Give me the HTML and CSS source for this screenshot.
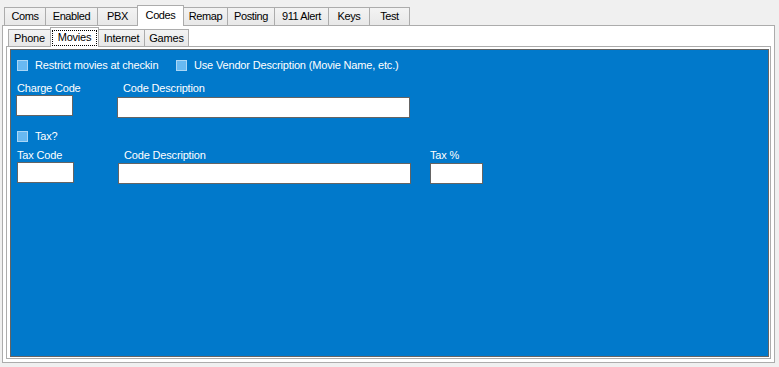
FILE: index.html
```html
<!DOCTYPE html>
<html>
<head>
<meta charset="utf-8">
<link rel="stylesheet" href="styles.css">
</head>
<body>
<div class="tabctl outer">
  <div class="tabstrip outer-strip">
    <div class="tab w42">Coms</div>
    <div class="tab w53">Enabled</div>
    <div class="tab w41">PBX</div>
    <div class="tab sel w47">Codes</div>
    <div class="tab w45">Remap</div>
    <div class="tab w48">Posting</div>
    <div class="tab w55">911 Alert</div>
    <div class="tab w42">Keys</div>
    <div class="tab w41 last">Test</div>
  </div>
  <div class="page outer-page">
    <div class="tabctl inner">
      <div class="tabstrip inner-strip">
        <div class="tab itab w43">Phone</div>
        <div class="tab itab sel isel w49"><span class="focus">Movies</span></div>
        <div class="tab itab w47">Internet</div>
        <div class="tab itab w45">Games</div>
      </div>
      <div class="page inner-page">
        <div class="blue">
          <div class="row chk-row r1">
            <label class="chk first"><span class="box"></span><span>Restrict movies at checkin</span></label>
            <label class="chk"><span class="box"></span><span>Use Vendor Description (Movie Name, etc.)</span></label>
          </div>
          <div class="row fields r2">
            <div class="field f-charge">
              <div class="lbl l2">Charge Code</div>
              <div class="inp in-charge"></div>
            </div>
            <div class="field f-desc">
              <div class="lbl l2 lbl-desc">Code Description</div>
              <div class="inp in-desc"></div>
            </div>
          </div>
          <div class="row chk-row r3">
            <label class="chk"><span class="box"></span><span>Tax?</span></label>
          </div>
          <div class="row fields r4">
            <div class="field f-taxcode">
              <div class="lbl l4">Tax Code</div>
              <div class="inp in-taxcode"></div>
            </div>
            <div class="field f-desc2">
              <div class="lbl l4 lbl-desc">Code Description</div>
              <div class="inp in-desc2"></div>
            </div>
            <div class="field f-taxpct">
              <div class="lbl l4">Tax %</div>
              <div class="inp in-taxpct"></div>
            </div>
          </div>
        </div>
      </div>
    </div>
  </div>
</div>
</body>
</html>
```
FILE: styles.css
```css
* { box-sizing: border-box; }
html, body { margin: 0; padding: 0; }
body {
  background: #f0f0f0;
  font-family: "Liberation Sans", Arial, sans-serif;
  font-size: 11px;
  color: #000;
  width: 779px;
  height: 367px;
  overflow: hidden;
}
.outer { margin: 5px 0 0 2px; width: 773px; }
.tabstrip {
  display: flex;
  align-items: flex-end;
  padding-left: 2px;
}
.outer-strip { height: 20px; }
.tab {
  height: 18px;
  margin-right: -1px;
  border: 1px solid #acacac;
  border-bottom: none;
  background: linear-gradient(#f3f3f3, #e8e8e8);
  display: flex;
  align-items: center;
  justify-content: center;
  letter-spacing: -0.4px;
  line-height: 13px;
  white-space: nowrap;
}
.tab.sel {
  height: 21px;
  margin-bottom: -1px;
  background: #fff;
  position: relative;
  z-index: 1;
  padding-bottom: 1px;
}
.w41 { width: 41px; } .w42 { width: 42px; } .w43 { width: 43px; }
.w45 { width: 45px; } .w47 { width: 47px; } .w48 { width: 48px; }
.w49 { width: 49px; } .w53 { width: 53px; } .w55 { width: 55px; }
.page {
  border: 1px solid #acacac;
  background: #fff;
}
.outer-page {
  height: 338px;
  padding: 1px 3px 3px 3px;
}
.inner-strip { height: 19px; }
.itab { height: 17px; letter-spacing: -0.2px; }
.itab.isel {
  height: 20px;
  padding: 2px 1px 1px 1px;
  align-items: stretch;
}
.focus {
  flex: 1;
  border: 1px dotted #000;
  display: flex;
  align-items: center;
  justify-content: center;
  padding-bottom: 1px;
}
.inner-page {
  height: 313px;
  padding: 2px 1px 1px 3px;
}
.blue {
  height: 308px;
  border: 1px solid #646464;
  background: #0179cb;
  color: #fff;
  letter-spacing: -0.17px;
  line-height: 13px;
}
.row { display: flex; align-items: flex-start; }
.chk-row { height: 13px; padding-left: 6px; }
.r1 { margin-top: 9px; }
.r2 { margin-top: 8px; }
.r3 { margin-top: 12px; }
.r4 { margin-top: 5px; }
.chk { display: flex; align-items: center; height: 13px; }
.chk.first { width: 159px; }
.box {
  width: 11px;
  height: 11px;
  margin-right: 7px;
  background: #68b9f2;
  border: 1px solid #a9d6f6;
}
.field { display: flex; flex-direction: column; }
.lbl { white-space: nowrap; }
.l2 { height: 15px; padding-top: 2px; }
.l4 { height: 14px; padding-top: 1px; }
.inp {
  height: 21px;
  background: #fff;
  border: 1px solid #646464;
}
.f-charge { margin-left: 5px; width: 57px; }
.f-charge .lbl { padding-left: 1px; }
.in-charge { width: 57px; margin-top: 0; }
.f-desc { margin-left: 44px; width: 293px; }
.lbl-desc { padding-left: 6px; }
.in-desc { width: 293px; margin-top: 2px; }
.f-taxcode { margin-left: 6px; width: 57px; }
.in-taxcode { width: 57px; margin-top: 0; }
.f-desc2 { margin-left: 44px; width: 293px; }
.in-desc2 { width: 293px; margin-top: 1px; }
.f-taxpct { margin-left: 19px; width: 53px; }
.in-taxpct { width: 53px; margin-top: 1px; }
```
